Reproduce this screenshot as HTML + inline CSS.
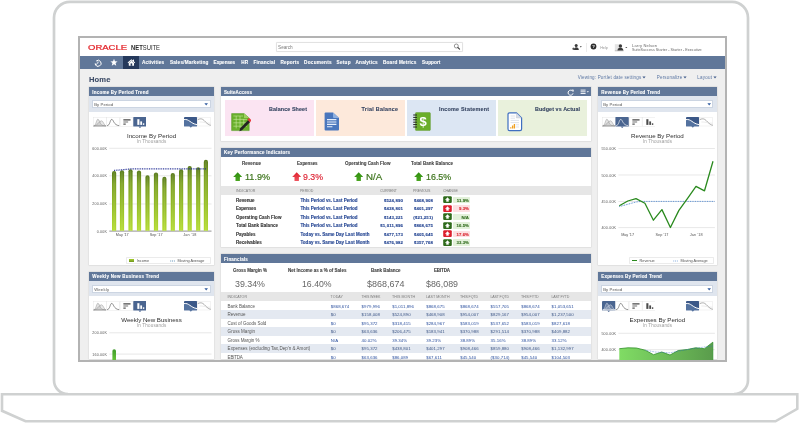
<!DOCTYPE html>
<html><head><meta charset="utf-8"><title>NetSuite Dashboard</title>
<style>
html,body{margin:0;padding:0;background:#fff;}
body{width:800px;height:423px;overflow:hidden;position:relative;font-family:"Liberation Sans", sans-serif;}
#frame{position:absolute;left:0;top:0;}
#scr{position:absolute;left:78px;top:36px;width:645px;height:322px;border:2px solid #b3b3b3;background:#efefef;overflow:hidden;will-change:transform;}
#scr div,#scr svg,#scr .t{position:absolute;}
.t{white-space:nowrap;display:block;}
</style></head><body>
<svg id="frame" width="800" height="423" viewBox="0 0 800 423">
<path d="M68 394.2 A14 14 0 0 1 54 380 V17.8 A16 16 0 0 1 70 1.8 H732 A16 16 0 0 1 748 17.8 V380 A14 14 0 0 1 734 394.2" fill="#fff" stroke="#cfd1d1" stroke-width="2.7"/>
<path d="M2 394.2 H797.3 V408.8 L775.5 421.3 H25.5 L2 410.8 Z" fill="#fff" stroke="#cfd1d1" stroke-width="2.6" stroke-linejoin="miter"/>
</svg>

<div id="scr">
<div style="left:0.00px;top:0.00px;width:645.00px;height:17.80px;background:#fff;"></div>
<div style="left:195.60px;top:4.20px;width:187.00px;height:9.80px;background:#fff;border:0.5px solid #e2e2e2;border-radius:1.2px;box-sizing:border-box;box-shadow:0 0 0.8px #e4e4e4;"></div>
<svg style="left:373.00px;top:5.40px;" width="8.00" height="8.00" viewBox="0 0 8.00 8.00"><circle cx="3.3" cy="3.0" r="2.0" fill="none" stroke="#6a6a6a" stroke-width="0.7"/><path d="M4.8 4.5 L6.6 6.1" stroke="#444" stroke-width="1.1" stroke-linecap="round"/></svg>
<svg style="left:490.50px;top:5.00px;" width="13.50" height="9.00" viewBox="0 0 13.50 9.00"><circle cx="5.2" cy="2.6" r="1.5" fill="#3a3a3a"/><path d="M3 7 Q3 4.2 5.2 4.2 Q7.6 4.2 7.8 7 Z" fill="#3a3a3a"/><path d="M1.2 5.8 h2.4 M2.4 4.6 v2.4" stroke="#3a3a3a" stroke-width="0.8"/><path d="M8.8 3.3 h2 l-1 1.1 z" fill="#333"/></svg>
<div style="left:505.50px;top:4.50px;width:0.50px;height:9.50px;background:#ececec;"></div>
<svg style="left:509.50px;top:5.30px;" width="7.50" height="7.50" viewBox="0 0 7.50 7.50"><circle cx="3.5" cy="3.5" r="2.9" fill="#2e2e2e"/><text x="3.5" y="5.1" font-size="4.4" font-weight="700" fill="#fff" text-anchor="middle" font-family="Liberation Sans, sans-serif">?</text></svg>
<svg style="left:533.50px;top:5.00px;" width="16.50" height="9.00" viewBox="0 0 16.50 9.00"><rect x="0.8" y="1.2" width="5" height="6.4" fill="#e4e4e4"/><circle cx="6.4" cy="3.0" r="1.7" fill="#3a3a3a"/><path d="M3.4 7.6 Q3.4 5.2 5.4 4.8 H7.4 Q9.4 5.2 9.4 7.6 Z" fill="#3a3a3a"/><path d="M0.8 7.8 h8.8" stroke="#666" stroke-width="0.4"/><path d="M11.2 3.9 h2.2 l-1.1 1.2 z" fill="#333"/></svg>
<div style="left:0.00px;top:17.70px;width:645.00px;height:13.10px;background:#607799;"></div>
<div style="left:42.60px;top:17.70px;width:16.90px;height:13.10px;background:#25395c;"></div>
<svg style="left:12.50px;top:19.50px;" width="10.00" height="10.00" viewBox="0 0 10.00 10.00"><path d="M3.2 3.0 A3 3 0 1 1 2.3 6.4" fill="none" stroke="#fff" stroke-width="1"/><path d="M1.6 5.2 L2.4 7.4 L4.2 6.0 Z" fill="#fff"/><path d="M5 3.4 V5.2 H3.8" fill="none" stroke="#fff" stroke-width="0.8"/></svg>
<svg style="left:30.20px;top:19.60px;" width="8.00" height="9.00" viewBox="0 0 8.00 9.00"><path d="M4 0.8 L4.95 3.3 L7.6 3.45 L5.55 5.1 L6.25 7.7 L4 6.25 L1.75 7.7 L2.45 5.1 L0.4 3.45 L3.05 3.3 Z" fill="#fff"/></svg>
<svg style="left:47.00px;top:19.60px;" width="9.00" height="9.00" viewBox="0 0 9.00 9.00"><path d="M0.6 4.6 L4.4 1.2 L8.2 4.6 L7.6 5.2 L4.4 2.4 L1.2 5.2 Z" fill="#fff"/><path d="M1.8 5 L4.4 2.8 L7 5 V7.8 H1.8 Z" fill="#fff"/><rect x="3.6" y="5.4" width="1.6" height="2.4" fill="#25395c"/><rect x="6" y="1.6" width="1" height="1.8" fill="#fff"/></svg>
<svg style="left:562.40px;top:38.20px;" width="4.00" height="3.00" viewBox="0 0 4.00 3.00"><path d="M0.4 0.5 H3.6 L2 2.5 Z" fill="#3f5a88"/></svg>
<svg style="left:602.90px;top:38.20px;" width="4.00" height="3.00" viewBox="0 0 4.00 3.00"><path d="M0.4 0.5 H3.6 L2 2.5 Z" fill="#3f5a88"/></svg>
<svg style="left:632.90px;top:38.20px;" width="4.00" height="3.00" viewBox="0 0 4.00 3.00"><path d="M0.4 0.5 H3.6 L2 2.5 Z" fill="#3f5a88"/></svg>
<div style="left:9.00px;top:49.40px;width:125.00px;height:177.80px;background:#fff;box-shadow:0 0 0.8px 0.4px #d4d4d4;"></div>
<div style="left:9.00px;top:49.30px;width:125.00px;height:9.20px;background:#607799;"></div>
<div style="left:9.00px;top:58.30px;width:125.00px;height:15.40px;background:#dfe5ee;"></div>
<div style="left:12.20px;top:62.20px;width:118.50px;height:8.20px;background:#fff;border:0.4px solid #ccd5e2;box-sizing:border-box;"></div>
<svg style="left:124.40px;top:65.30px;" width="4.40" height="3.00" viewBox="0 0 4.40 3.00"><path d="M0.4 0.3 H4 L2.2 2.5 Z" fill="#2f5a9e"/></svg>
<svg style="left:12.60px;top:78.60px;" width="53.72" height="11.40" viewBox="0 0 53.72 11.40"><rect x="0.20" y="0.2" width="13.03" height="9.2" fill="#fff" stroke="#e0e0e0" stroke-width="0.4"/><path d="M0.60 9.00 C3.00 9.00 3.40 2.20 4.90 2.20 C6.40 2.20 6.80 7.00 9.00 8.20 L12.80 9.00 Z" fill="#808080" fill-opacity="0.22" stroke="#808080" stroke-width="0.4"/><path d="M0.60 9.00 C4.50 9.00 6.20 3.80 8.40 3.80 C10.40 3.80 10.80 8.40 13.00 9.00 Z" fill="#808080" fill-opacity="0.18" stroke="#808080" stroke-width="0.4"/><rect x="13.63" y="0.2" width="13.03" height="9.2" fill="#fff" stroke="#e0e0e0" stroke-width="0.4"/><path d="M14.03 8.70 C17.03 8.70 17.03 2.40 18.73 2.40 C20.63 2.40 20.43 8.20 26.23 8.70" fill="none" stroke="#555" stroke-width="0.65"/><rect x="27.06" y="0.2" width="13.03" height="9.2" fill="#fff" stroke="#e0e0e0" stroke-width="0.4"/><path d="M30.36 2.90 h7.2" stroke="#2e2e2e" stroke-width="1.1"/><path d="M30.36 5.00 h4.8" stroke="#707070" stroke-width="1.0"/><path d="M30.36 7.10 h2.4" stroke="#2e2e2e" stroke-width="1.0"/><rect x="40.29" y="0" width="13.43" height="9.6" rx="0.5" fill="#4a6590"/><path d="M45.50 9.5 h3 l-1.5 1.6 z" fill="#4a6590"/><path d="M45.39 7.90 v-5.7" stroke="#fff" stroke-width="2.1"/><path d="M48.19 7.90 v-3.5" stroke="#fff" stroke-width="1.8"/><path d="M50.59 7.90 v-1.6" stroke="#fff" stroke-width="1.4"/></svg>
<svg style="left:103.60px;top:78.60px;" width="27.00" height="11.40" viewBox="0 0 27.00 11.40"><rect x="0" y="0" width="13" height="9.2" rx="0.5" fill="#3b5888"/><path d="M0 2.6 C5 1.6 6 6.4 13 7.6 V9.2 H0 Z" fill="#54729f"/><path d="M5.3 9.1 h3 l-1.5 1.6 z" fill="#54729f"/><path d="M0 2.6 C5 1.6 6.4 6.6 13 7.6" fill="none" stroke="#fff" stroke-width="1"/><rect x="13.2" y="0.2" width="13.6" height="8.799999999999999" fill="#fff" stroke="#e0e0e0" stroke-width="0.4"/><path d="M13.8 2.6 C18 0.6 19.6 3 21.6 5 S25 8 26.8 8.3" fill="none" stroke="#888" stroke-width="0.7"/><path d="M15.4 5 C19 4.6 22 6.4 26.4 6.2" fill="none" stroke="#cfcfcf" stroke-width="0.4"/></svg>
<svg style="left:9.00px;top:102.00px;" width="125.00" height="100.00" viewBox="89 140 125 100"><path d="M109.3 148.3 H211.5" stroke="#dedede" stroke-width="0.7"/><path d="M109.3 175.8 H211.5" stroke="#dedede" stroke-width="0.7"/><path d="M109.3 204.0 H211.5" stroke="#dedede" stroke-width="0.7"/><path d="M109.3 231.2 H211.5" stroke="#a8a8a8" stroke-width="1.2"/><defs><linearGradient id="bg1" x1="0" y1="0" x2="0" y2="1"><stop offset="0" stop-color="#587a1c"/><stop offset="0.22" stop-color="#7ea324"/><stop offset="0.65" stop-color="#9ac229"/><stop offset="1" stop-color="#b4dc32"/></linearGradient></defs><path d="M112.00 230.8 V173.10 a2.1 2.1 0 0 1 4.2 0 V230.8 Z" fill="url(#bg1)"/><path d="M113.40 230.8 V172.20 h1.4 V230.8 Z" fill="#fff" fill-opacity="0.1"/><path d="M119.90 230.8 V172.30 a2.1 2.1 0 0 1 4.2 0 V230.8 Z" fill="url(#bg1)"/><path d="M121.30 230.8 V171.40 h1.4 V230.8 Z" fill="#fff" fill-opacity="0.1"/><path d="M128.40 230.8 V171.30 a2.1 2.1 0 0 1 4.2 0 V230.8 Z" fill="url(#bg1)"/><path d="M129.80 230.8 V170.40 h1.4 V230.8 Z" fill="#fff" fill-opacity="0.1"/><path d="M136.90 230.8 V172.60 a2.1 2.1 0 0 1 4.2 0 V230.8 Z" fill="url(#bg1)"/><path d="M138.30 230.8 V171.70 h1.4 V230.8 Z" fill="#fff" fill-opacity="0.1"/><path d="M145.40 230.8 V177.30 a2.1 2.1 0 0 1 4.2 0 V230.8 Z" fill="url(#bg1)"/><path d="M146.80 230.8 V176.40 h1.4 V230.8 Z" fill="#fff" fill-opacity="0.1"/><path d="M153.90 230.8 V174.50 a2.1 2.1 0 0 1 4.2 0 V230.8 Z" fill="url(#bg1)"/><path d="M155.30 230.8 V173.60 h1.4 V230.8 Z" fill="#fff" fill-opacity="0.1"/><path d="M162.30 230.8 V178.90 a2.1 2.1 0 0 1 4.2 0 V230.8 Z" fill="url(#bg1)"/><path d="M163.70 230.8 V178.00 h1.4 V230.8 Z" fill="#fff" fill-opacity="0.1"/><path d="M170.70 230.8 V175.10 a2.1 2.1 0 0 1 4.2 0 V230.8 Z" fill="url(#bg1)"/><path d="M172.10 230.8 V174.20 h1.4 V230.8 Z" fill="#fff" fill-opacity="0.1"/><path d="M179.00 230.8 V171.30 a2.1 2.1 0 0 1 4.2 0 V230.8 Z" fill="url(#bg1)"/><path d="M180.40 230.8 V170.40 h1.4 V230.8 Z" fill="#fff" fill-opacity="0.1"/><path d="M187.60 230.8 V168.10 a2.1 2.1 0 0 1 4.2 0 V230.8 Z" fill="url(#bg1)"/><path d="M189.00 230.8 V167.20 h1.4 V230.8 Z" fill="#fff" fill-opacity="0.1"/><path d="M196.10 230.8 V169.40 a2.1 2.1 0 0 1 4.2 0 V230.8 Z" fill="url(#bg1)"/><path d="M197.50 230.8 V168.50 h1.4 V230.8 Z" fill="#fff" fill-opacity="0.1"/><path d="M203.80 230.8 V161.90 a2.1 2.1 0 0 1 4.2 0 V230.8 Z" fill="url(#bg1)"/><path d="M205.20 230.8 V161.00 h1.4 V230.8 Z" fill="#fff" fill-opacity="0.1"/><path d="M114.1 170.4 L122 169.8 L130.5 168.9 H206.5" fill="none" stroke="#1f2a93" stroke-width="1.2" stroke-dasharray="0.9 0.85"/></svg>
<div style="left:46.40px;top:219.00px;width:84.20px;height:6.80px;background:#fff;border:0.4px solid #ebebeb;box-sizing:border-box;border-radius:0.8px;"></div>
<div style="left:49.30px;top:220.60px;width:4.60px;height:3.60px;background:#86ad24;background:linear-gradient(#a6cf2e,#6e9420);"></div>
<svg style="left:89.60px;top:221.60px;" width="5.40" height="2.00" viewBox="0 0 5.40 2.00"><path d="M0.3 1 H5.2" stroke="#2d6f9f" stroke-width="0.8" stroke-dasharray="0.9 0.9"/></svg>
<div style="left:9.00px;top:233.90px;width:125.00px;height:87.60px;background:#fff;box-shadow:0 0 0.8px 0.4px #d4d4d4;"></div>
<div style="left:9.00px;top:233.80px;width:125.00px;height:9.20px;background:#607799;"></div>
<div style="left:9.00px;top:242.80px;width:125.00px;height:15.40px;background:#dfe5ee;"></div>
<div style="left:12.20px;top:246.70px;width:118.50px;height:8.20px;background:#fff;border:0.4px solid #ccd5e2;box-sizing:border-box;"></div>
<svg style="left:124.40px;top:249.80px;" width="4.40" height="3.00" viewBox="0 0 4.40 3.00"><path d="M0.4 0.3 H4 L2.2 2.5 Z" fill="#2f5a9e"/></svg>
<svg style="left:12.60px;top:263.10px;" width="53.72" height="11.40" viewBox="0 0 53.72 11.40"><rect x="0.20" y="0.2" width="13.03" height="9.2" fill="#fff" stroke="#e0e0e0" stroke-width="0.4"/><path d="M0.60 9.00 C3.00 9.00 3.40 2.20 4.90 2.20 C6.40 2.20 6.80 7.00 9.00 8.20 L12.80 9.00 Z" fill="#808080" fill-opacity="0.22" stroke="#808080" stroke-width="0.4"/><path d="M0.60 9.00 C4.50 9.00 6.20 3.80 8.40 3.80 C10.40 3.80 10.80 8.40 13.00 9.00 Z" fill="#808080" fill-opacity="0.18" stroke="#808080" stroke-width="0.4"/><rect x="13.63" y="0.2" width="13.03" height="9.2" fill="#fff" stroke="#e0e0e0" stroke-width="0.4"/><path d="M14.03 8.70 C17.03 8.70 17.03 2.40 18.73 2.40 C20.63 2.40 20.43 8.20 26.23 8.70" fill="none" stroke="#555" stroke-width="0.65"/><rect x="27.06" y="0.2" width="13.03" height="9.2" fill="#fff" stroke="#e0e0e0" stroke-width="0.4"/><path d="M30.36 2.90 h7.2" stroke="#2e2e2e" stroke-width="1.1"/><path d="M30.36 5.00 h4.8" stroke="#707070" stroke-width="1.0"/><path d="M30.36 7.10 h2.4" stroke="#2e2e2e" stroke-width="1.0"/><rect x="40.29" y="0" width="13.43" height="9.6" rx="0.5" fill="#4a6590"/><path d="M45.50 9.5 h3 l-1.5 1.6 z" fill="#4a6590"/><path d="M45.39 7.90 v-5.7" stroke="#fff" stroke-width="2.1"/><path d="M48.19 7.90 v-3.5" stroke="#fff" stroke-width="1.8"/><path d="M50.59 7.90 v-1.6" stroke="#fff" stroke-width="1.4"/></svg>
<svg style="left:103.60px;top:263.10px;" width="27.00" height="11.40" viewBox="0 0 27.00 11.40"><rect x="0" y="0" width="13" height="9.2" rx="0.5" fill="#3b5888"/><path d="M0 2.6 C5 1.6 6 6.4 13 7.6 V9.2 H0 Z" fill="#54729f"/><path d="M5.3 9.1 h3 l-1.5 1.6 z" fill="#54729f"/><path d="M0 2.6 C5 1.6 6.4 6.6 13 7.6" fill="none" stroke="#fff" stroke-width="1"/><rect x="13.2" y="0.2" width="13.6" height="8.799999999999999" fill="#fff" stroke="#e0e0e0" stroke-width="0.4"/><path d="M13.8 2.6 C18 0.6 19.6 3 21.6 5 S25 8 26.8 8.3" fill="none" stroke="#888" stroke-width="0.7"/><path d="M15.4 5 C19 4.6 22 6.4 26.4 6.2" fill="none" stroke="#cfcfcf" stroke-width="0.4"/></svg>
<svg style="left:9.00px;top:290.00px;" width="125.00" height="34.00" viewBox="89 328 125 34"><path d="M109.3 332.8 H211.5" stroke="#dedede" stroke-width="0.7"/><path d="M109.3 354.1 H211.5" stroke="#dedede" stroke-width="0.7"/><defs><linearGradient id="bg2" x1="0" y1="0" x2="0" y2="1"><stop offset="0" stop-color="#3f9a2a"/><stop offset="1" stop-color="#6ccb3a"/></linearGradient></defs><path d="M112.4 362 V351 a1.8 1.8 0 0 1 3.6 0 V362 Z" fill="url(#bg2)"/></svg>
<div style="left:518.00px;top:49.40px;width:118.80px;height:177.80px;background:#fff;box-shadow:0 0 0.8px 0.4px #d4d4d4;"></div>
<div style="left:518.00px;top:49.30px;width:118.80px;height:9.20px;background:#607799;"></div>
<div style="left:518.00px;top:58.30px;width:118.80px;height:15.40px;background:#dfe5ee;"></div>
<div style="left:521.20px;top:62.20px;width:112.30px;height:8.20px;background:#fff;border:0.4px solid #ccd5e2;box-sizing:border-box;"></div>
<svg style="left:627.20px;top:65.30px;" width="4.40" height="3.00" viewBox="0 0 4.40 3.00"><path d="M0.4 0.3 H4 L2.2 2.5 Z" fill="#2f5a9e"/></svg>
<svg style="left:521.60px;top:78.60px;" width="53.72" height="11.40" viewBox="0 0 53.72 11.40"><rect x="0.20" y="0.2" width="13.03" height="9.2" fill="#fff" stroke="#e0e0e0" stroke-width="0.4"/><path d="M0.60 9.00 C3.00 9.00 3.40 2.20 4.90 2.20 C6.40 2.20 6.80 7.00 9.00 8.20 L12.80 9.00 Z" fill="#808080" fill-opacity="0.22" stroke="#808080" stroke-width="0.4"/><path d="M0.60 9.00 C4.50 9.00 6.20 3.80 8.40 3.80 C10.40 3.80 10.80 8.40 13.00 9.00 Z" fill="#808080" fill-opacity="0.18" stroke="#808080" stroke-width="0.4"/><rect x="13.43" y="0" width="13.43" height="9.6" rx="0.5" fill="#4a6590"/><path d="M18.64 9.5 h3 l-1.5 1.6 z" fill="#4a6590"/><path d="M14.03 8.70 C17.03 8.70 17.03 2.40 18.73 2.40 C20.63 2.40 20.43 8.20 26.23 8.70" fill="none" stroke="#fff" stroke-width="0.65"/><rect x="27.06" y="0.2" width="13.03" height="9.2" fill="#fff" stroke="#e0e0e0" stroke-width="0.4"/><path d="M30.36 2.90 h7.2" stroke="#2e2e2e" stroke-width="1.1"/><path d="M30.36 5.00 h4.8" stroke="#707070" stroke-width="1.0"/><path d="M30.36 7.10 h2.4" stroke="#2e2e2e" stroke-width="1.0"/><rect x="40.49" y="0.2" width="13.03" height="9.2" fill="#fff" stroke="#e0e0e0" stroke-width="0.4"/><path d="M45.39 7.90 v-5.7" stroke="#4a4a4a" stroke-width="2.1"/><path d="M48.19 7.90 v-3.5" stroke="#4a4a4a" stroke-width="1.8"/><path d="M50.59 7.90 v-1.6" stroke="#4a4a4a" stroke-width="1.4"/></svg>
<svg style="left:606.40px;top:78.60px;" width="27.00" height="11.40" viewBox="0 0 27.00 11.40"><rect x="0" y="0" width="13" height="9.2" rx="0.5" fill="#3b5888"/><path d="M0 2.6 C5 1.6 6 6.4 13 7.6 V9.2 H0 Z" fill="#54729f"/><path d="M5.3 9.1 h3 l-1.5 1.6 z" fill="#54729f"/><path d="M0 2.6 C5 1.6 6.4 6.6 13 7.6" fill="none" stroke="#fff" stroke-width="1"/><rect x="13.2" y="0.2" width="13.6" height="8.799999999999999" fill="#fff" stroke="#e0e0e0" stroke-width="0.4"/><path d="M13.8 2.6 C18 0.6 19.6 3 21.6 5 S25 8 26.8 8.3" fill="none" stroke="#888" stroke-width="0.7"/><path d="M15.4 5 C19 4.6 22 6.4 26.4 6.2" fill="none" stroke="#cfcfcf" stroke-width="0.4"/></svg>
<svg style="left:518.00px;top:102.00px;" width="119.00" height="100.00" viewBox="598 140 119 100"><path d="M618.4 148.5 H714.9" stroke="#dedede" stroke-width="0.7"/><path d="M618.4 175.0 H714.9" stroke="#dedede" stroke-width="0.7"/><path d="M618.4 201.5 H714.9" stroke="#dedede" stroke-width="0.7"/><path d="M618.4 227.6 H714.9" stroke="#dedede" stroke-width="0.7"/><path d="M619.3 206.6 L636 202 L641 201.4 H714.5" fill="none" stroke="#4f88d0" stroke-width="1" stroke-dasharray="0.85 0.85"/><path d="M619.3 205.8 L627.8 201.0 L636.0 198.6 L644.9 203.3 L653.4 220.2 L661.9 209.6 L670.4 227.5 L678.9 210.4 L687.4 198.7 L696.0 186.4 L704.5 190.8 L713.0 161.2" fill="none" stroke="#2a8a1e" stroke-width="1.3" stroke-linejoin="round"/></svg>
<div style="left:549.40px;top:218.80px;width:84.50px;height:7.00px;background:#fff;border:0.4px solid #ebebeb;box-sizing:border-box;border-radius:0.8px;"></div>
<div style="left:552.00px;top:222.20px;width:4.90px;height:1.00px;background:#2a8a1e;"></div>
<svg style="left:592.70px;top:221.60px;" width="5.50" height="2.00" viewBox="0 0 5.50 2.00"><path d="M0.3 1 H5.2" stroke="#5f93d3" stroke-width="0.8" stroke-dasharray="0.9 0.9"/></svg>
<div style="left:518.00px;top:233.90px;width:118.80px;height:87.60px;background:#fff;box-shadow:0 0 0.8px 0.4px #d4d4d4;"></div>
<div style="left:518.00px;top:233.80px;width:118.80px;height:9.20px;background:#607799;"></div>
<div style="left:518.00px;top:242.80px;width:118.80px;height:15.40px;background:#dfe5ee;"></div>
<div style="left:521.20px;top:246.70px;width:112.30px;height:8.20px;background:#fff;border:0.4px solid #ccd5e2;box-sizing:border-box;"></div>
<svg style="left:627.20px;top:249.80px;" width="4.40" height="3.00" viewBox="0 0 4.40 3.00"><path d="M0.4 0.3 H4 L2.2 2.5 Z" fill="#2f5a9e"/></svg>
<svg style="left:521.60px;top:263.10px;" width="53.72" height="11.40" viewBox="0 0 53.72 11.40"><rect x="0.00" y="0" width="13.43" height="9.6" rx="0.5" fill="#4a6590"/><path d="M5.21 9.5 h3 l-1.5 1.6 z" fill="#4a6590"/><path d="M0.60 9.00 C3.00 9.00 3.40 2.20 4.90 2.20 C6.40 2.20 6.80 7.00 9.00 8.20 L12.80 9.00 Z" fill="#fff" fill-opacity="0.22" stroke="#fff" stroke-width="0.4"/><path d="M0.60 9.00 C4.50 9.00 6.20 3.80 8.40 3.80 C10.40 3.80 10.80 8.40 13.00 9.00 Z" fill="#fff" fill-opacity="0.18" stroke="#fff" stroke-width="0.4"/><rect x="13.63" y="0.2" width="13.03" height="9.2" fill="#fff" stroke="#e0e0e0" stroke-width="0.4"/><path d="M14.03 8.70 C17.03 8.70 17.03 2.40 18.73 2.40 C20.63 2.40 20.43 8.20 26.23 8.70" fill="none" stroke="#555" stroke-width="0.65"/><rect x="27.06" y="0.2" width="13.03" height="9.2" fill="#fff" stroke="#e0e0e0" stroke-width="0.4"/><path d="M30.36 2.90 h7.2" stroke="#2e2e2e" stroke-width="1.1"/><path d="M30.36 5.00 h4.8" stroke="#707070" stroke-width="1.0"/><path d="M30.36 7.10 h2.4" stroke="#2e2e2e" stroke-width="1.0"/><rect x="40.49" y="0.2" width="13.03" height="9.2" fill="#fff" stroke="#e0e0e0" stroke-width="0.4"/><path d="M45.39 7.90 v-5.7" stroke="#4a4a4a" stroke-width="2.1"/><path d="M48.19 7.90 v-3.5" stroke="#4a4a4a" stroke-width="1.8"/><path d="M50.59 7.90 v-1.6" stroke="#4a4a4a" stroke-width="1.4"/></svg>
<svg style="left:606.40px;top:263.10px;" width="27.00" height="11.40" viewBox="0 0 27.00 11.40"><rect x="0" y="0" width="13" height="9.2" rx="0.5" fill="#3b5888"/><path d="M0 2.6 C5 1.6 6 6.4 13 7.6 V9.2 H0 Z" fill="#54729f"/><path d="M5.3 9.1 h3 l-1.5 1.6 z" fill="#54729f"/><path d="M0 2.6 C5 1.6 6.4 6.6 13 7.6" fill="none" stroke="#fff" stroke-width="1"/><rect x="13.2" y="0.2" width="13.6" height="8.799999999999999" fill="#fff" stroke="#e0e0e0" stroke-width="0.4"/><path d="M13.8 2.6 C18 0.6 19.6 3 21.6 5 S25 8 26.8 8.3" fill="none" stroke="#888" stroke-width="0.7"/><path d="M15.4 5 C19 4.6 22 6.4 26.4 6.2" fill="none" stroke="#cfcfcf" stroke-width="0.4"/></svg>
<svg style="left:518.00px;top:290.00px;" width="119.00" height="34.00" viewBox="598 328 119 34"><path d="M618.4 333.3 H714.9" stroke="#dedede" stroke-width="0.7"/><path d="M618.4 349.7 H714.9" stroke="#dedede" stroke-width="0.7"/><defs><linearGradient id="ag" x1="0" y1="0" x2="1" y2="0"><stop offset="0" stop-color="#80dc64"/><stop offset="1" stop-color="#5a9c4c"/></linearGradient></defs><path d="M619.3 362 L619.3 348.7 L628.0 347.8 L636.3 348.0 L645.3 350.2 L653.5 354.7 L661.8 352.0 L670.0 355.0 L678.3 350.5 L687.3 349.5 L695.5 347.8 L704.5 348.7 L712.8 342.2 L712.8 362 Z" fill="url(#ag)"/><path d="M619.3 348.7 L628.0 347.8 L636.3 348.0 L645.3 350.2 L653.5 354.7 L661.8 352.0 L670.0 355.0 L678.3 350.5 L687.3 349.5 L695.5 347.8 L704.5 348.7 L712.8 342.2 V362" fill="none" stroke="#2f8f28" stroke-width="0.8" stroke-linejoin="round"/><path d="M645.5 350.2 L655 352 L670 352.8 L678 351.2 L695.5 348.2 L712.8 346" fill="none" stroke="#3a78c8" stroke-width="0.6" stroke-dasharray="0.8 0.8"/></svg>
<div style="left:141.00px;top:49.40px;width:370.20px;height:53.80px;background:#fff;box-shadow:0 0 0.8px 0.4px #d4d4d4;"></div>
<div style="left:141.00px;top:49.30px;width:370.20px;height:9.20px;background:#607799;"></div>
<svg style="left:486.50px;top:50.60px;" width="7.50" height="7.00" viewBox="0 0 7.50 7.00"><path d="M5.6 2.2 A2.5 2.5 0 1 0 6 4.4" fill="none" stroke="#fff" stroke-width="1"/><path d="M4.6 0.6 L6.8 0.8 L6.4 3 Z" fill="#fff"/></svg>
<svg style="left:499.50px;top:51.40px;" width="10.00" height="6.00" viewBox="0 0 10.00 6.00"><path d="M0.6 1.1 h5 M0.6 2.8 h5 M0.6 4.5 h5" stroke="#fff" stroke-width="0.9"/><path d="M6.6 2.2 h2.4 l-1.2 1.3 z" fill="#fff"/></svg>
<div style="left:144.80px;top:61.90px;width:89.20px;height:36.00px;background:#fbe4f2;"></div>
<div style="left:236.00px;top:61.90px;width:89.00px;height:36.00px;background:#fde9db;"></div>
<div style="left:327.00px;top:61.90px;width:88.80px;height:36.00px;background:#dce6f3;"></div>
<div style="left:418.20px;top:61.90px;width:89.00px;height:36.00px;background:#e9f1dc;"></div>
<svg style="left:151.00px;top:74.60px;" width="20.00" height="19.00" viewBox="0 0 20.00 19.00"><path d="M0.6 0.6 H13 L18.2 5 V17.6 H0.6 Z" fill="#6ab02c" stroke="#4f9420" stroke-width="0.5"/>
<path d="M13 0.6 V5 H18.2 Z" fill="#9fd060"/>
<path d="M2.4 3 H12 M2.4 6.4 H16 M2.4 9.8 H16 M2.4 13.2 H16 M5.2 3 V15.4 M9 3 V15.4 M12.8 6 V15.4" stroke="#c8e8a0" stroke-width="0.6" fill="none"/>
<path d="M17.2 7 L19.2 9 L11 17.2 L8.4 18.2 L9.2 15.2 Z" fill="#222"/>
<path d="M16.6 6.2 a1.6 1.6 0 0 1 3 2.4 l-0.6 0.6 l-2.2 -2.2 z" fill="#e8383c"/></svg>
<svg style="left:244.00px;top:74.00px;" width="16.00" height="19.00" viewBox="0 0 16.00 19.00"><path d="M0.6 1.4 Q0.6 0.4 1.6 0.4 H9 L15 6 V17.6 Q15 18.6 14 18.6 H1.6 Q0.6 18.6 0.6 17.6 Z" fill="#4a77bd"/>
<path d="M9 0.4 L15 6 H10 Q9 6 9 5 Z" fill="#8fb0e0"/>
<path d="M3 7.6 H12.4 M3 10 H12.4 M3 12.4 H12.4 M3 14.8 H8.4" stroke="#e6eefa" stroke-width="1.1"/></svg>
<svg style="left:333.40px;top:74.00px;" width="18.00" height="19.00" viewBox="0 0 18.00 19.00"><rect x="2.4" y="0.4" width="15" height="18.2" rx="1.2" fill="#6aae2a"/>
<rect x="2.4" y="0.4" width="15" height="18.2" rx="1.2" fill="none" stroke="#558f20" stroke-width="0.4"/>
<path d="M0.6 3 h3 M0.6 5.4 h3 M0.6 7.8 h3 M0.6 10.2 h3 M0.6 12.6 h3 M0.6 15 h3" stroke="#222" stroke-width="1" stroke-linecap="round"/>
<text x="10.2" y="14.2" font-size="13" font-weight="700" fill="#fff" text-anchor="middle" font-family="Liberation Sans, sans-serif">$</text></svg>
<svg style="left:426.50px;top:74.00px;" width="16.00" height="19.50" viewBox="0 0 16.00 19.50"><path d="M1 2.4 Q1 0.8 2.6 0.8 H9.4 L14.6 6 V17 Q14.6 18.6 13 18.6 H2.6 Q1 18.6 1 17 Z" fill="#fff" stroke="#3f6fc0" stroke-width="1.2"/>
<path d="M9.4 1 V6 H14.4" fill="#d8dde6" stroke="#b8c0cc" stroke-width="0.4"/>
<path d="M3.6 4 H8 M3.6 6.2 H8 M3.6 8.4 H12 M3.6 10.6 H12 M8.6 12.8 H12 M8.6 15 H12" stroke="#cfd6e2" stroke-width="0.7"/>
<path d="M3.8 16.6 v-1.4 M5.6 16.6 v-3 M7.4 16.6 v-4.6" stroke="#f0a020" stroke-width="1.3"/></svg>
<div style="left:141.00px;top:110.30px;width:370.20px;height:99.00px;background:#fff;box-shadow:0 0 0.8px 0.4px #d4d4d4;"></div>
<div style="left:141.00px;top:110.20px;width:370.20px;height:9.20px;background:#607799;"></div>
<svg style="left:153.00px;top:134.30px;" width="9.40" height="9.20" viewBox="0 0 9.40 9.20"><defs><linearGradient id="ar233" x1="0" y1="0" x2="0" y2="1"><stop offset="0" stop-color="#2f8f10"/><stop offset="1" stop-color="#4aa520"/></linearGradient></defs><path d="M4.7 0.3 L9.2 5 H6.9 V9 H2.5 V5 H0.2 Z" fill="url(#ar233)"/></svg>
<svg style="left:212.00px;top:134.30px;" width="9.40" height="9.20" viewBox="0 0 9.40 9.20"><defs><linearGradient id="ar292" x1="0" y1="0" x2="0" y2="1"><stop offset="0" stop-color="#e0202c"/><stop offset="1" stop-color="#ee5560"/></linearGradient></defs><path d="M4.7 0.3 L9.2 5 H6.9 V9 H2.5 V5 H0.2 Z" fill="url(#ar292)"/></svg>
<svg style="left:274.00px;top:134.30px;" width="9.40" height="9.20" viewBox="0 0 9.40 9.20"><defs><linearGradient id="ar354" x1="0" y1="0" x2="0" y2="1"><stop offset="0" stop-color="#2f8f10"/><stop offset="1" stop-color="#4aa520"/></linearGradient></defs><path d="M4.7 0.3 L9.2 5 H6.9 V9 H2.5 V5 H0.2 Z" fill="url(#ar354)"/></svg>
<svg style="left:333.60px;top:134.30px;" width="9.40" height="9.20" viewBox="0 0 9.40 9.20"><defs><linearGradient id="ar413" x1="0" y1="0" x2="0" y2="1"><stop offset="0" stop-color="#2f8f10"/><stop offset="1" stop-color="#4aa520"/></linearGradient></defs><path d="M4.7 0.3 L9.2 5 H6.9 V9 H2.5 V5 H0.2 Z" fill="url(#ar413)"/></svg>
<div style="left:141.00px;top:148.40px;width:370.20px;height:8.60px;background:#e6e6e6;"></div>
<div style="left:373.00px;top:158.60px;width:17.20px;height:6.80px;background:#e3f1da;border-radius:0.8px;"></div>
<svg style="left:363.00px;top:158.40px;" width="9.20" height="7.20" viewBox="0 0 9.20 7.20"><rect x="0.2" y="0.2" width="8.6" height="6.8" rx="1.1" fill="#2f6b1c"/><path d="M4.5 1.5 L6.7 3.7 H5.6 V5.6 H3.4 V3.7 H2.3 Z" fill="#fff" stroke="#fff" stroke-width="0.3" stroke-linejoin="round"/></svg>
<div style="left:373.00px;top:167.12px;width:17.20px;height:6.80px;background:#fde0e2;border-radius:0.8px;"></div>
<svg style="left:363.00px;top:166.92px;" width="9.20" height="7.20" viewBox="0 0 9.20 7.20"><rect x="0.2" y="0.2" width="8.6" height="6.8" rx="1.1" fill="#dc1f2e"/><path d="M4.5 1.5 L6.7 3.7 H5.6 V5.6 H3.4 V3.7 H2.3 Z" fill="#fff" stroke="#fff" stroke-width="0.3" stroke-linejoin="round"/></svg>
<div style="left:373.00px;top:175.64px;width:17.20px;height:6.80px;background:#e3f1da;border-radius:0.8px;"></div>
<svg style="left:363.00px;top:175.44px;" width="9.20" height="7.20" viewBox="0 0 9.20 7.20"><rect x="0.2" y="0.2" width="8.6" height="6.8" rx="1.1" fill="#2f6b1c"/><path d="M4.5 1.5 L6.7 3.7 H5.6 V5.6 H3.4 V3.7 H2.3 Z" fill="#fff" stroke="#fff" stroke-width="0.3" stroke-linejoin="round"/></svg>
<div style="left:373.00px;top:184.16px;width:17.20px;height:6.80px;background:#e3f1da;border-radius:0.8px;"></div>
<svg style="left:363.00px;top:183.96px;" width="9.20" height="7.20" viewBox="0 0 9.20 7.20"><rect x="0.2" y="0.2" width="8.6" height="6.8" rx="1.1" fill="#2f6b1c"/><path d="M4.5 1.5 L6.7 3.7 H5.6 V5.6 H3.4 V3.7 H2.3 Z" fill="#fff" stroke="#fff" stroke-width="0.3" stroke-linejoin="round"/></svg>
<div style="left:373.00px;top:192.68px;width:17.20px;height:6.80px;background:#fde0e2;border-radius:0.8px;"></div>
<svg style="left:363.00px;top:192.48px;" width="9.20" height="7.20" viewBox="0 0 9.20 7.20"><rect x="0.2" y="0.2" width="8.6" height="6.8" rx="1.1" fill="#dc1f2e"/><path d="M4.5 1.5 L6.7 3.7 H5.6 V5.6 H3.4 V3.7 H2.3 Z" fill="#fff" stroke="#fff" stroke-width="0.3" stroke-linejoin="round"/></svg>
<div style="left:373.00px;top:201.20px;width:17.20px;height:6.80px;background:#e3f1da;border-radius:0.8px;"></div>
<svg style="left:363.00px;top:201.00px;" width="9.20" height="7.20" viewBox="0 0 9.20 7.20"><rect x="0.2" y="0.2" width="8.6" height="6.8" rx="1.1" fill="#2f6b1c"/><path d="M4.5 1.5 L6.7 3.7 H5.6 V5.6 H3.4 V3.7 H2.3 Z" fill="#fff" stroke="#fff" stroke-width="0.3" stroke-linejoin="round"/></svg>
<div style="left:141.00px;top:216.40px;width:370.20px;height:105.10px;background:#fff;box-shadow:0 0 0.8px 0.4px #d4d4d4;"></div>
<div style="left:141.00px;top:216.30px;width:370.20px;height:9.20px;background:#607799;"></div>
<div style="left:141.00px;top:254.40px;width:370.20px;height:8.60px;background:#e6e6e6;"></div>
<div style="left:141.00px;top:272.26px;width:370.20px;height:8.52px;background:#e4e9f1;"></div>
<div style="left:141.00px;top:289.30px;width:370.20px;height:8.52px;background:#e4e9f1;"></div>
<div style="left:141.00px;top:306.34px;width:370.20px;height:8.52px;background:#e4e9f1;"></div>
<span id="t0" class="t" style="font-size:6.5px;font-weight:400;color:#e3262c;line-height:7.00px;top:5.84px;transform:scaleX(1.4588);transform-origin:0 50%;left:8.40px;-webkit-text-stroke:0.22px #e3262c;">ORACLE</span>
<span id="t1" class="t" style="font-size:6.3px;font-weight:400;color:#2a2a2a;line-height:7.00px;top:6.07px;transform:scaleX(0.9308);transform-origin:0 50%;left:51.30px;"><b>NET</b>SUITE</span>
<span id="t2" class="t" style="font-size:4.7px;font-weight:400;color:#7c7c7c;line-height:5.00px;top:7.09px;letter-spacing:-0.052px;left:198.10px;">Search</span>
<span id="t3" class="t" style="font-size:3.8px;font-weight:400;color:#9a9a9a;line-height:4.00px;top:7.87px;letter-spacing:-0.071px;left:520.20px;">Help</span>
<span id="t4" class="t" style="font-size:4.0px;font-weight:400;color:#666;line-height:5.00px;top:5.14px;letter-spacing:0.210px;left:552.00px;">Larry Nelson</span>
<span id="t5" class="t" style="font-size:3.7px;font-weight:400;color:#666;line-height:4.00px;top:10.43px;letter-spacing:0.038px;left:552.00px;">SuiteSuccess Starter - Starter - Executive</span>
<span id="t6" class="t" style="font-size:4.7px;font-weight:700;color:#fff;line-height:5.00px;top:21.99px;letter-spacing:0.128px;left:62.00px;-webkit-text-stroke:0.1px;">Activities</span>
<span id="t7" class="t" style="font-size:4.7px;font-weight:700;color:#fff;line-height:5.00px;top:21.99px;letter-spacing:0.193px;left:90.00px;-webkit-text-stroke:0.1px;">Sales/Marketing</span>
<span id="t8" class="t" style="font-size:4.7px;font-weight:700;color:#fff;line-height:5.00px;top:21.99px;letter-spacing:-0.042px;left:133.60px;-webkit-text-stroke:0.1px;">Expenses</span>
<span id="t9" class="t" style="font-size:4.7px;font-weight:700;color:#fff;line-height:5.00px;top:21.99px;letter-spacing:0.219px;left:161.20px;-webkit-text-stroke:0.1px;">HR</span>
<span id="t10" class="t" style="font-size:4.7px;font-weight:700;color:#fff;line-height:5.00px;top:21.99px;letter-spacing:0.134px;left:173.60px;-webkit-text-stroke:0.1px;">Financial</span>
<span id="t11" class="t" style="font-size:4.7px;font-weight:700;color:#fff;line-height:5.00px;top:21.99px;letter-spacing:0.147px;left:200.40px;-webkit-text-stroke:0.1px;">Reports</span>
<span id="t12" class="t" style="font-size:4.7px;font-weight:700;color:#fff;line-height:5.00px;top:21.99px;letter-spacing:0.259px;left:224.00px;-webkit-text-stroke:0.1px;">Documents</span>
<span id="t13" class="t" style="font-size:4.7px;font-weight:700;color:#fff;line-height:5.00px;top:21.99px;letter-spacing:0.242px;left:256.60px;-webkit-text-stroke:0.1px;">Setup</span>
<span id="t14" class="t" style="font-size:4.7px;font-weight:700;color:#fff;line-height:5.00px;top:21.99px;letter-spacing:0.145px;left:275.60px;-webkit-text-stroke:0.1px;">Analytics</span>
<span id="t15" class="t" style="font-size:4.7px;font-weight:700;color:#fff;line-height:5.00px;top:21.99px;letter-spacing:0.178px;left:303.00px;-webkit-text-stroke:0.1px;">Board Metrics</span>
<span id="t16" class="t" style="font-size:4.7px;font-weight:700;color:#fff;line-height:5.00px;top:21.99px;letter-spacing:0.072px;left:342.00px;-webkit-text-stroke:0.1px;">Support</span>
<span id="t17" class="t" style="font-size:7.6px;font-weight:700;color:#3c4b66;line-height:9.00px;top:37.14px;letter-spacing:0.097px;left:9.00px;-webkit-text-stroke:0.1px;">Home</span>
<span id="t18" class="t" style="font-size:4.5px;font-weight:400;color:#5a75a2;line-height:5.00px;top:36.62px;letter-spacing:0.188px;left:497.80px;">Viewing: Portlet date settings</span>
<span id="t19" class="t" style="font-size:4.5px;font-weight:400;color:#5a75a2;line-height:5.00px;top:36.62px;letter-spacing:0.188px;left:576.80px;">Personalize</span>
<span id="t20" class="t" style="font-size:4.5px;font-weight:400;color:#5a75a2;line-height:5.00px;top:36.62px;letter-spacing:0.217px;left:617.30px;">Layout</span>
<span id="t21" class="t" style="font-size:4.5px;font-weight:700;color:#fff;line-height:5.00px;top:51.52px;letter-spacing:0.223px;left:12.30px;-webkit-text-stroke:0.1px;">Income By Period Trend</span>
<span id="t22" class="t" style="font-size:4.2px;font-weight:400;color:#555;line-height:5.00px;top:64.21px;letter-spacing:0.093px;left:14.20px;">By Period</span>
<span id="t23" class="t" style="font-size:6.2px;font-weight:400;color:#2e2e2e;line-height:7.00px;top:93.93px;letter-spacing:0.024px;left:-28.49px;width:200px;text-align:center;">Income By Period</span>
<span id="t24" class="t" style="font-size:4.5px;font-weight:400;color:#9a9a9a;line-height:5.00px;top:100.72px;letter-spacing:0.192px;left:-28.40px;width:200px;text-align:center;">In Thousands</span>
<span id="t25" class="t" style="font-size:3.6px;font-weight:400;color:#555;line-height:4.00px;top:109.10px;letter-spacing:0.202px;left:12.30px;">600.00K</span>
<span id="t26" class="t" style="font-size:3.6px;font-weight:400;color:#555;line-height:4.00px;top:136.00px;letter-spacing:0.202px;left:12.30px;">400.00K</span>
<span id="t27" class="t" style="font-size:3.6px;font-weight:400;color:#555;line-height:4.00px;top:164.30px;letter-spacing:0.202px;left:12.30px;">200.00K</span>
<span id="t28" class="t" style="font-size:3.6px;font-weight:400;color:#555;line-height:4.00px;top:191.60px;letter-spacing:0.198px;left:16.70px;">0.00K</span>
<span id="t29" class="t" style="font-size:3.8px;font-weight:400;color:#555;line-height:4.00px;top:195.27px;letter-spacing:-0.048px;left:-57.82px;width:200px;text-align:center;">May '17</span>
<span id="t30" class="t" style="font-size:3.8px;font-weight:400;color:#555;line-height:4.00px;top:195.27px;letter-spacing:0.022px;left:-23.89px;width:200px;text-align:center;">Sep '17</span>
<span id="t31" class="t" style="font-size:3.8px;font-weight:400;color:#555;line-height:4.00px;top:195.27px;letter-spacing:0.129px;left:9.86px;width:200px;text-align:center;">Jan '18</span>
<span id="t32" class="t" style="font-size:3.8px;font-weight:400;color:#555;line-height:4.00px;top:220.97px;letter-spacing:-0.051px;left:56.80px;">Income</span>
<span id="t33" class="t" style="font-size:3.8px;font-weight:400;color:#555;line-height:4.00px;top:220.97px;letter-spacing:-0.006px;left:97.40px;">Moving Average</span>
<span id="t34" class="t" style="font-size:4.5px;font-weight:700;color:#fff;line-height:5.00px;top:236.02px;letter-spacing:0.254px;left:12.30px;-webkit-text-stroke:0.1px;">Weekly New Business Trend</span>
<span id="t35" class="t" style="font-size:4.2px;font-weight:400;color:#555;line-height:5.00px;top:248.71px;letter-spacing:0.229px;left:14.20px;">Weekly</span>
<span id="t36" class="t" style="font-size:6.2px;font-weight:400;color:#2e2e2e;line-height:7.00px;top:278.13px;letter-spacing:-0.034px;left:-28.52px;width:200px;text-align:center;">Weekly New Business</span>
<span id="t37" class="t" style="font-size:4.5px;font-weight:400;color:#9a9a9a;line-height:5.00px;top:285.42px;letter-spacing:0.192px;left:-28.40px;width:200px;text-align:center;">In Thousands</span>
<span id="t38" class="t" style="font-size:3.6px;font-weight:400;color:#555;line-height:4.00px;top:293.20px;letter-spacing:0.202px;left:12.30px;">200.00K</span>
<span id="t39" class="t" style="font-size:3.6px;font-weight:400;color:#555;line-height:4.00px;top:314.50px;letter-spacing:0.202px;left:12.30px;">160.00K</span>
<span id="t40" class="t" style="font-size:4.5px;font-weight:700;color:#fff;line-height:5.00px;top:51.52px;letter-spacing:0.189px;left:521.30px;-webkit-text-stroke:0.1px;">Revenue By Period Trend</span>
<span id="t41" class="t" style="font-size:4.2px;font-weight:400;color:#555;line-height:5.00px;top:64.21px;letter-spacing:0.093px;left:523.20px;">By Period</span>
<span id="t42" class="t" style="font-size:6.2px;font-weight:400;color:#2e2e2e;line-height:7.00px;top:93.93px;letter-spacing:-0.039px;left:477.38px;width:200px;text-align:center;">Revenue By Period</span>
<span id="t43" class="t" style="font-size:4.5px;font-weight:400;color:#9a9a9a;line-height:5.00px;top:100.72px;letter-spacing:0.192px;left:477.50px;width:200px;text-align:center;">In Thousands</span>
<span id="t44" class="t" style="font-size:3.6px;font-weight:400;color:#555;line-height:4.00px;top:109.10px;letter-spacing:0.202px;left:521.40px;">550.00K</span>
<span id="t45" class="t" style="font-size:3.6px;font-weight:400;color:#555;line-height:4.00px;top:135.50px;letter-spacing:0.202px;left:521.40px;">500.00K</span>
<span id="t46" class="t" style="font-size:3.6px;font-weight:400;color:#555;line-height:4.00px;top:161.90px;letter-spacing:0.202px;left:521.40px;">450.00K</span>
<span id="t47" class="t" style="font-size:3.6px;font-weight:400;color:#555;line-height:4.00px;top:188.00px;letter-spacing:0.202px;left:521.40px;">400.00K</span>
<span id="t48" class="t" style="font-size:3.8px;font-weight:400;color:#555;line-height:4.00px;top:195.27px;letter-spacing:-0.048px;left:447.58px;width:200px;text-align:center;">May '17</span>
<span id="t49" class="t" style="font-size:3.8px;font-weight:400;color:#555;line-height:4.00px;top:195.27px;letter-spacing:0.022px;left:482.01px;width:200px;text-align:center;">Sep '17</span>
<span id="t50" class="t" style="font-size:3.8px;font-weight:400;color:#555;line-height:4.00px;top:195.27px;letter-spacing:0.129px;left:516.16px;width:200px;text-align:center;">Jan '18</span>
<span id="t51" class="t" style="font-size:3.8px;font-weight:400;color:#555;line-height:4.00px;top:220.97px;letter-spacing:-0.017px;left:559.60px;">Revenue</span>
<span id="t52" class="t" style="font-size:3.8px;font-weight:400;color:#555;line-height:4.00px;top:220.97px;letter-spacing:0.010px;left:600.40px;">Moving Average</span>
<span id="t53" class="t" style="font-size:4.5px;font-weight:700;color:#fff;line-height:5.00px;top:236.02px;letter-spacing:0.162px;left:521.30px;-webkit-text-stroke:0.1px;">Expenses By Period Trend</span>
<span id="t54" class="t" style="font-size:4.2px;font-weight:400;color:#555;line-height:5.00px;top:248.71px;letter-spacing:0.093px;left:523.20px;">By Period</span>
<span id="t55" class="t" style="font-size:6.2px;font-weight:400;color:#2e2e2e;line-height:7.00px;top:278.13px;letter-spacing:-0.001px;left:477.40px;width:200px;text-align:center;">Expenses By Period</span>
<span id="t56" class="t" style="font-size:4.5px;font-weight:400;color:#9a9a9a;line-height:5.00px;top:285.42px;letter-spacing:0.192px;left:477.50px;width:200px;text-align:center;">In Thousands</span>
<span id="t57" class="t" style="font-size:3.6px;font-weight:400;color:#555;line-height:4.00px;top:293.70px;letter-spacing:0.202px;left:521.40px;">500.00K</span>
<span id="t58" class="t" style="font-size:3.6px;font-weight:400;color:#555;line-height:4.00px;top:310.10px;letter-spacing:0.202px;left:521.40px;">400.00K</span>
<span id="t59" class="t" style="font-size:4.5px;font-weight:700;color:#fff;line-height:5.00px;top:51.52px;letter-spacing:0.123px;left:144.00px;-webkit-text-stroke:0.1px;">SuiteAccess</span>
<span id="t60" class="t" style="font-size:5.4px;font-weight:700;color:#33425f;line-height:6.00px;top:67.84px;letter-spacing:0.095px;left:189.00px;-webkit-text-stroke:0.1px;">Balance Sheet</span>
<span id="t61" class="t" style="font-size:5.4px;font-weight:700;color:#33425f;line-height:6.00px;top:67.84px;letter-spacing:0.261px;left:281.60px;-webkit-text-stroke:0.1px;">Trial Balance</span>
<span id="t62" class="t" style="font-size:5.4px;font-weight:700;color:#33425f;line-height:6.00px;top:67.84px;letter-spacing:0.237px;left:359.00px;-webkit-text-stroke:0.1px;">Income Statement</span>
<span id="t63" class="t" style="font-size:5.4px;font-weight:700;color:#33425f;line-height:6.00px;top:67.84px;letter-spacing:0.077px;left:455.00px;-webkit-text-stroke:0.1px;">Budget vs Actual</span>
<span id="t64" class="t" style="font-size:4.5px;font-weight:700;color:#fff;line-height:5.00px;top:112.42px;letter-spacing:0.249px;left:144.00px;-webkit-text-stroke:0.1px;">Key Performance Indicators</span>
<span id="t65" class="t" style="font-size:4.5px;font-weight:700;color:#444;line-height:5.00px;top:123.42px;letter-spacing:0.039px;left:162.00px;-webkit-text-stroke:0.1px;">Revenue</span>
<span id="t66" class="t" style="font-size:4.5px;font-weight:700;color:#444;line-height:5.00px;top:123.42px;letter-spacing:-0.059px;left:217.00px;-webkit-text-stroke:0.1px;">Expenses</span>
<span id="t67" class="t" style="font-size:4.5px;font-weight:700;color:#444;line-height:5.00px;top:123.42px;letter-spacing:0.021px;left:265.00px;-webkit-text-stroke:0.1px;">Operating Cash Flow</span>
<span id="t68" class="t" style="font-size:4.5px;font-weight:700;color:#444;line-height:5.00px;top:123.42px;letter-spacing:0.048px;left:331.00px;-webkit-text-stroke:0.1px;">Total Bank Balance</span>
<span id="t69" class="t" style="font-size:9.3px;font-weight:400;color:#3d741c;line-height:10.00px;top:134.15px;transform:scaleX(0.9738);transform-origin:0 50%;left:165.30px;-webkit-text-stroke:0.2px;">11.9%</span>
<span id="t70" class="t" style="font-size:9.3px;font-weight:400;color:#de2a3a;line-height:10.00px;top:134.15px;transform:scaleX(0.9433);transform-origin:0 50%;left:223.20px;-webkit-text-stroke:0.2px;">9.3%</span>
<span id="t71" class="t" style="font-size:9.3px;font-weight:400;color:#3d741c;line-height:10.00px;top:134.15px;transform:scaleX(1.0452);transform-origin:0 50%;left:285.80px;-webkit-text-stroke:0.2px;">N/A</span>
<span id="t72" class="t" style="font-size:9.3px;font-weight:400;color:#3d741c;line-height:10.00px;top:134.15px;transform:scaleX(0.9555);transform-origin:0 50%;left:345.60px;-webkit-text-stroke:0.2px;">16.5%</span>
<span id="t73" class="t" style="font-size:3.6px;font-weight:400;color:#7a7a7a;line-height:4.00px;top:151.10px;letter-spacing:-0.005px;left:156.00px;">INDICATOR</span>
<span id="t74" class="t" style="font-size:3.6px;font-weight:400;color:#7a7a7a;line-height:4.00px;top:151.10px;letter-spacing:-0.076px;left:220.00px;">PERIOD</span>
<span id="t75" class="t" style="font-size:3.6px;font-weight:400;color:#7a7a7a;line-height:4.00px;top:151.10px;letter-spacing:-0.096px;left:300.00px;">CURRENT</span>
<span id="t76" class="t" style="font-size:3.6px;font-weight:400;color:#7a7a7a;line-height:4.00px;top:151.10px;letter-spacing:-0.168px;left:333.00px;">PREVIOUS</span>
<span id="t77" class="t" style="font-size:3.6px;font-weight:400;color:#7a7a7a;line-height:4.00px;top:151.10px;letter-spacing:-0.078px;left:363.00px;">CHANGE</span>
<span id="t78" class="t" style="font-size:4.5px;font-weight:700;color:#333;line-height:5.00px;top:159.62px;letter-spacing:-0.028px;left:156.00px;-webkit-text-stroke:0.1px;">Revenue</span>
<span id="t79" class="t" style="font-size:4.5px;font-weight:700;color:#1f4190;line-height:5.00px;top:159.62px;letter-spacing:-0.022px;left:220.40px;-webkit-text-stroke:0.1px;">This Period vs. Last Period</span>
<span id="t80" class="t" style="font-size:4.35px;font-weight:700;color:#1f4190;line-height:5.00px;top:159.57px;right:322.00px;-webkit-text-stroke:0.1px;letter-spacing:0.12px;">$524,890</span>
<span id="t81" class="t" style="font-size:4.35px;font-weight:700;color:#1f4190;line-height:5.00px;top:159.57px;right:292.00px;-webkit-text-stroke:0.1px;letter-spacing:0.12px;">$468,908</span>
<span id="t82" class="t" style="font-size:4.3px;font-weight:700;color:#2f6b1c;line-height:5.00px;top:159.55px;right:256.00px;-webkit-text-stroke:0.1px;letter-spacing:0.06px;">11.9%</span>
<span id="t83" class="t" style="font-size:4.5px;font-weight:700;color:#333;line-height:5.00px;top:168.14px;letter-spacing:-0.117px;left:156.00px;-webkit-text-stroke:0.1px;">Expenses</span>
<span id="t84" class="t" style="font-size:4.5px;font-weight:700;color:#1f4190;line-height:5.00px;top:168.14px;letter-spacing:-0.022px;left:220.40px;-webkit-text-stroke:0.1px;">This Period vs. Last Period</span>
<span id="t85" class="t" style="font-size:4.35px;font-weight:700;color:#1f4190;line-height:5.00px;top:168.09px;right:322.00px;-webkit-text-stroke:0.1px;letter-spacing:0.12px;">$438,801</span>
<span id="t86" class="t" style="font-size:4.35px;font-weight:700;color:#1f4190;line-height:5.00px;top:168.09px;right:292.00px;-webkit-text-stroke:0.1px;letter-spacing:0.12px;">$401,297</span>
<span id="t87" class="t" style="font-size:4.3px;font-weight:700;color:#d9232e;line-height:5.00px;top:168.07px;right:256.00px;-webkit-text-stroke:0.1px;letter-spacing:0.06px;">9.3%</span>
<span id="t88" class="t" style="font-size:4.5px;font-weight:700;color:#333;line-height:5.00px;top:176.66px;letter-spacing:0.021px;left:156.00px;-webkit-text-stroke:0.1px;">Operating Cash Flow</span>
<span id="t89" class="t" style="font-size:4.5px;font-weight:700;color:#1f4190;line-height:5.00px;top:176.66px;letter-spacing:-0.022px;left:220.40px;-webkit-text-stroke:0.1px;">This Period vs. Last Period</span>
<span id="t90" class="t" style="font-size:4.35px;font-weight:700;color:#1f4190;line-height:5.00px;top:176.61px;right:322.00px;-webkit-text-stroke:0.1px;letter-spacing:0.12px;">$143,221</span>
<span id="t91" class="t" style="font-size:4.35px;font-weight:700;color:#1f4190;line-height:5.00px;top:176.61px;right:292.00px;-webkit-text-stroke:0.1px;letter-spacing:0.12px;">($21,251)</span>
<span id="t92" class="t" style="font-size:4.3px;font-weight:700;color:#2f6b1c;line-height:5.00px;top:176.59px;right:256.00px;-webkit-text-stroke:0.1px;letter-spacing:0.06px;">N/A</span>
<span id="t93" class="t" style="font-size:4.5px;font-weight:700;color:#333;line-height:5.00px;top:185.18px;letter-spacing:0.048px;left:156.00px;-webkit-text-stroke:0.1px;">Total Bank Balance</span>
<span id="t94" class="t" style="font-size:4.5px;font-weight:700;color:#1f4190;line-height:5.00px;top:185.18px;letter-spacing:-0.022px;left:220.40px;-webkit-text-stroke:0.1px;">This Period vs. Last Period</span>
<span id="t95" class="t" style="font-size:4.35px;font-weight:700;color:#1f4190;line-height:5.00px;top:185.13px;right:322.00px;-webkit-text-stroke:0.1px;letter-spacing:0.12px;">$1,011,896</span>
<span id="t96" class="t" style="font-size:4.35px;font-weight:700;color:#1f4190;line-height:5.00px;top:185.13px;right:292.00px;-webkit-text-stroke:0.1px;letter-spacing:0.12px;">$868,675</span>
<span id="t97" class="t" style="font-size:4.3px;font-weight:700;color:#2f6b1c;line-height:5.00px;top:185.11px;right:256.00px;-webkit-text-stroke:0.1px;letter-spacing:0.06px;">16.5%</span>
<span id="t98" class="t" style="font-size:4.5px;font-weight:700;color:#333;line-height:5.00px;top:193.70px;letter-spacing:0.012px;left:156.00px;-webkit-text-stroke:0.1px;">Payables</span>
<span id="t99" class="t" style="font-size:4.5px;font-weight:700;color:#1f4190;line-height:5.00px;top:193.70px;letter-spacing:0.027px;left:220.40px;-webkit-text-stroke:0.1px;">Today vs. Same Day Last Month</span>
<span id="t100" class="t" style="font-size:4.35px;font-weight:700;color:#1f4190;line-height:5.00px;top:193.65px;right:322.00px;-webkit-text-stroke:0.1px;letter-spacing:0.12px;">$477,173</span>
<span id="t101" class="t" style="font-size:4.35px;font-weight:700;color:#1f4190;line-height:5.00px;top:193.65px;right:292.00px;-webkit-text-stroke:0.1px;letter-spacing:0.12px;">$405,645</span>
<span id="t102" class="t" style="font-size:4.3px;font-weight:700;color:#d9232e;line-height:5.00px;top:193.63px;right:256.00px;-webkit-text-stroke:0.1px;letter-spacing:0.06px;">17.6%</span>
<span id="t103" class="t" style="font-size:4.5px;font-weight:700;color:#333;line-height:5.00px;top:202.22px;letter-spacing:-0.023px;left:156.00px;-webkit-text-stroke:0.1px;">Receivables</span>
<span id="t104" class="t" style="font-size:4.5px;font-weight:700;color:#1f4190;line-height:5.00px;top:202.22px;letter-spacing:0.027px;left:220.40px;-webkit-text-stroke:0.1px;">Today vs. Same Day Last Month</span>
<span id="t105" class="t" style="font-size:4.35px;font-weight:700;color:#1f4190;line-height:5.00px;top:202.17px;right:322.00px;-webkit-text-stroke:0.1px;letter-spacing:0.12px;">$476,982</span>
<span id="t106" class="t" style="font-size:4.35px;font-weight:700;color:#1f4190;line-height:5.00px;top:202.17px;right:292.00px;-webkit-text-stroke:0.1px;letter-spacing:0.12px;">$357,768</span>
<span id="t107" class="t" style="font-size:4.3px;font-weight:700;color:#2f6b1c;line-height:5.00px;top:202.15px;right:256.00px;-webkit-text-stroke:0.1px;letter-spacing:0.06px;">33.3%</span>
<span id="t108" class="t" style="font-size:4.5px;font-weight:700;color:#fff;line-height:5.00px;top:218.52px;letter-spacing:0.198px;left:144.00px;-webkit-text-stroke:0.1px;">Financials</span>
<span id="t109" class="t" style="font-size:4.5px;font-weight:700;color:#444;line-height:5.00px;top:229.62px;letter-spacing:-0.020px;left:153.00px;-webkit-text-stroke:0.1px;">Gross Margin %</span>
<span id="t110" class="t" style="font-size:4.5px;font-weight:700;color:#444;line-height:5.00px;top:229.62px;letter-spacing:0.015px;left:208.00px;-webkit-text-stroke:0.1px;">Net Income as a % of Sales</span>
<span id="t111" class="t" style="font-size:4.5px;font-weight:700;color:#444;line-height:5.00px;top:229.62px;letter-spacing:-0.011px;left:291.00px;-webkit-text-stroke:0.1px;">Bank Balance</span>
<span id="t112" class="t" style="font-size:4.5px;font-weight:700;color:#444;line-height:5.00px;top:229.62px;letter-spacing:-0.150px;left:354.00px;-webkit-text-stroke:0.1px;">EBITDA</span>
<span id="t113" class="t" style="font-size:9.3px;font-weight:400;color:#666;line-height:10.00px;top:240.55px;transform:scaleX(0.9510);transform-origin:0 50%;left:155.00px;">39.34%</span>
<span id="t114" class="t" style="font-size:9.3px;font-weight:400;color:#666;line-height:10.00px;top:240.55px;transform:scaleX(0.9383);transform-origin:0 50%;left:222.40px;">16.40%</span>
<span id="t115" class="t" style="font-size:9.3px;font-weight:400;color:#666;line-height:10.00px;top:240.55px;transform:scaleX(0.9644);transform-origin:0 50%;left:287.00px;">$868,674</span>
<span id="t116" class="t" style="font-size:9.3px;font-weight:400;color:#666;line-height:10.00px;top:240.55px;transform:scaleX(0.9521);transform-origin:0 50%;left:346.00px;">$86,089</span>
<span id="t117" class="t" style="font-size:3.6px;font-weight:400;color:#7a7a7a;line-height:4.00px;top:257.00px;letter-spacing:-0.005px;left:147.60px;">INDICATOR</span>
<span id="t118" class="t" style="font-size:3.6px;font-weight:400;color:#7a7a7a;line-height:4.00px;top:257.00px;letter-spacing:0.084px;left:250.60px;">TODAY</span>
<span id="t119" class="t" style="font-size:3.6px;font-weight:400;color:#7a7a7a;line-height:4.00px;top:257.00px;letter-spacing:-0.098px;left:281.40px;">THIS WEEK</span>
<span id="t120" class="t" style="font-size:3.6px;font-weight:400;color:#7a7a7a;line-height:4.00px;top:257.00px;letter-spacing:0.071px;left:312.00px;">THIS MONTH</span>
<span id="t121" class="t" style="font-size:3.6px;font-weight:400;color:#7a7a7a;line-height:4.00px;top:257.00px;letter-spacing:0.055px;left:346.00px;">LAST MONTH</span>
<span id="t122" class="t" style="font-size:3.6px;font-weight:400;color:#7a7a7a;line-height:4.00px;top:257.00px;letter-spacing:-0.121px;left:380.00px;">THIS FQTD</span>
<span id="t123" class="t" style="font-size:3.6px;font-weight:400;color:#7a7a7a;line-height:4.00px;top:257.00px;letter-spacing:-0.138px;left:410.40px;">LAST FQTD</span>
<span id="t124" class="t" style="font-size:3.6px;font-weight:400;color:#7a7a7a;line-height:4.00px;top:257.00px;letter-spacing:-0.122px;left:441.00px;">THIS FYTD</span>
<span id="t125" class="t" style="font-size:3.6px;font-weight:400;color:#7a7a7a;line-height:4.00px;top:257.00px;letter-spacing:-0.164px;left:471.40px;">LAST FYTD</span>
<span id="t126" class="t" style="font-size:4.5px;font-weight:400;color:#555;line-height:5.00px;top:265.62px;letter-spacing:-0.035px;left:147.60px;">Bank Balance</span>
<span id="t127" class="t" style="font-size:4.35px;font-weight:400;color:#2a4f9e;line-height:5.00px;top:265.57px;left:250.80px;letter-spacing:0.04px;">$868,674</span>
<span id="t128" class="t" style="font-size:4.35px;font-weight:400;color:#2a4f9e;line-height:5.00px;top:265.57px;left:281.60px;letter-spacing:0.04px;">$979,996</span>
<span id="t129" class="t" style="font-size:4.35px;font-weight:400;color:#2a4f9e;line-height:5.00px;top:265.57px;left:312.20px;letter-spacing:0.04px;">$1,011,896</span>
<span id="t130" class="t" style="font-size:4.35px;font-weight:400;color:#2a4f9e;line-height:5.00px;top:265.57px;left:346.20px;letter-spacing:0.04px;">$868,675</span>
<span id="t131" class="t" style="font-size:4.35px;font-weight:400;color:#2a4f9e;line-height:5.00px;top:265.57px;left:380.20px;letter-spacing:0.04px;">$868,674</span>
<span id="t132" class="t" style="font-size:4.35px;font-weight:400;color:#2a4f9e;line-height:5.00px;top:265.57px;left:410.60px;letter-spacing:0.04px;">$557,705</span>
<span id="t133" class="t" style="font-size:4.35px;font-weight:400;color:#2a4f9e;line-height:5.00px;top:265.57px;left:441.20px;letter-spacing:0.04px;">$868,674</span>
<span id="t134" class="t" style="font-size:4.35px;font-weight:400;color:#2a4f9e;line-height:5.00px;top:265.57px;left:471.60px;letter-spacing:0.04px;">$1,053,651</span>
<span id="t135" class="t" style="font-size:4.5px;font-weight:400;color:#555;line-height:5.00px;top:274.14px;letter-spacing:-0.036px;left:147.60px;">Revenue</span>
<span id="t136" class="t" style="font-size:4.35px;font-weight:400;color:#3d5686;line-height:5.00px;top:274.09px;left:250.80px;letter-spacing:0.04px;">$0</span>
<span id="t137" class="t" style="font-size:4.35px;font-weight:400;color:#3d5686;line-height:5.00px;top:274.09px;left:281.60px;letter-spacing:0.04px;">$158,008</span>
<span id="t138" class="t" style="font-size:4.35px;font-weight:400;color:#3d5686;line-height:5.00px;top:274.09px;left:312.20px;letter-spacing:0.04px;">$524,890</span>
<span id="t139" class="t" style="font-size:4.35px;font-weight:400;color:#3d5686;line-height:5.00px;top:274.09px;left:346.20px;letter-spacing:0.04px;">$468,908</span>
<span id="t140" class="t" style="font-size:4.35px;font-weight:400;color:#3d5686;line-height:5.00px;top:274.09px;left:380.20px;letter-spacing:0.04px;">$954,007</span>
<span id="t141" class="t" style="font-size:4.35px;font-weight:400;color:#3d5686;line-height:5.00px;top:274.09px;left:410.60px;letter-spacing:0.04px;">$829,167</span>
<span id="t142" class="t" style="font-size:4.35px;font-weight:400;color:#3d5686;line-height:5.00px;top:274.09px;left:441.20px;letter-spacing:0.04px;">$954,007</span>
<span id="t143" class="t" style="font-size:4.35px;font-weight:400;color:#3d5686;line-height:5.00px;top:274.09px;left:471.60px;letter-spacing:0.04px;">$1,237,500</span>
<span id="t144" class="t" style="font-size:4.5px;font-weight:400;color:#555;line-height:5.00px;top:282.66px;letter-spacing:-0.014px;left:147.60px;">Cost of Goods Sold</span>
<span id="t145" class="t" style="font-size:4.35px;font-weight:400;color:#2a4f9e;line-height:5.00px;top:282.61px;left:250.80px;letter-spacing:0.04px;">$0</span>
<span id="t146" class="t" style="font-size:4.35px;font-weight:400;color:#2a4f9e;line-height:5.00px;top:282.61px;left:281.60px;letter-spacing:0.04px;">$95,372</span>
<span id="t147" class="t" style="font-size:4.35px;font-weight:400;color:#2a4f9e;line-height:5.00px;top:282.61px;left:312.20px;letter-spacing:0.04px;">$318,415</span>
<span id="t148" class="t" style="font-size:4.35px;font-weight:400;color:#2a4f9e;line-height:5.00px;top:282.61px;left:346.20px;letter-spacing:0.04px;">$284,967</span>
<span id="t149" class="t" style="font-size:4.35px;font-weight:400;color:#2a4f9e;line-height:5.00px;top:282.61px;left:380.20px;letter-spacing:0.04px;">$583,019</span>
<span id="t150" class="t" style="font-size:4.35px;font-weight:400;color:#2a4f9e;line-height:5.00px;top:282.61px;left:410.60px;letter-spacing:0.04px;">$537,652</span>
<span id="t151" class="t" style="font-size:4.35px;font-weight:400;color:#2a4f9e;line-height:5.00px;top:282.61px;left:441.20px;letter-spacing:0.04px;">$583,019</span>
<span id="t152" class="t" style="font-size:4.35px;font-weight:400;color:#2a4f9e;line-height:5.00px;top:282.61px;left:471.60px;letter-spacing:0.04px;">$827,618</span>
<span id="t153" class="t" style="font-size:4.5px;font-weight:400;color:#555;line-height:5.00px;top:291.18px;letter-spacing:0.035px;left:147.60px;">Gross Margin</span>
<span id="t154" class="t" style="font-size:4.35px;font-weight:400;color:#3d5686;line-height:5.00px;top:291.13px;left:250.80px;letter-spacing:0.04px;">$0</span>
<span id="t155" class="t" style="font-size:4.35px;font-weight:400;color:#3d5686;line-height:5.00px;top:291.13px;left:281.60px;letter-spacing:0.04px;">$63,636</span>
<span id="t156" class="t" style="font-size:4.35px;font-weight:400;color:#3d5686;line-height:5.00px;top:291.13px;left:312.20px;letter-spacing:0.04px;">$206,475</span>
<span id="t157" class="t" style="font-size:4.35px;font-weight:400;color:#3d5686;line-height:5.00px;top:291.13px;left:346.20px;letter-spacing:0.04px;">$183,941</span>
<span id="t158" class="t" style="font-size:4.35px;font-weight:400;color:#3d5686;line-height:5.00px;top:291.13px;left:380.20px;letter-spacing:0.04px;">$370,988</span>
<span id="t159" class="t" style="font-size:4.35px;font-weight:400;color:#3d5686;line-height:5.00px;top:291.13px;left:410.60px;letter-spacing:0.04px;">$291,514</span>
<span id="t160" class="t" style="font-size:4.35px;font-weight:400;color:#3d5686;line-height:5.00px;top:291.13px;left:441.20px;letter-spacing:0.04px;">$370,988</span>
<span id="t161" class="t" style="font-size:4.35px;font-weight:400;color:#3d5686;line-height:5.00px;top:291.13px;left:471.60px;letter-spacing:0.04px;">$409,882</span>
<span id="t162" class="t" style="font-size:4.5px;font-weight:400;color:#555;line-height:5.00px;top:299.70px;letter-spacing:-0.036px;left:147.60px;">Gross Margin %</span>
<span id="t163" class="t" style="font-size:4.35px;font-weight:400;color:#2a4f9e;line-height:5.00px;top:299.65px;left:250.80px;letter-spacing:0.04px;">N/A</span>
<span id="t164" class="t" style="font-size:4.35px;font-weight:400;color:#2a4f9e;line-height:5.00px;top:299.65px;left:281.60px;letter-spacing:0.04px;">40.02%</span>
<span id="t165" class="t" style="font-size:4.35px;font-weight:400;color:#2a4f9e;line-height:5.00px;top:299.65px;left:312.20px;letter-spacing:0.04px;">39.34%</span>
<span id="t166" class="t" style="font-size:4.35px;font-weight:400;color:#2a4f9e;line-height:5.00px;top:299.65px;left:346.20px;letter-spacing:0.04px;">39.23%</span>
<span id="t167" class="t" style="font-size:4.35px;font-weight:400;color:#2a4f9e;line-height:5.00px;top:299.65px;left:380.20px;letter-spacing:0.04px;">38.89%</span>
<span id="t168" class="t" style="font-size:4.35px;font-weight:400;color:#2a4f9e;line-height:5.00px;top:299.65px;left:410.60px;letter-spacing:0.04px;">35.16%</span>
<span id="t169" class="t" style="font-size:4.35px;font-weight:400;color:#2a4f9e;line-height:5.00px;top:299.65px;left:441.20px;letter-spacing:0.04px;">38.89%</span>
<span id="t170" class="t" style="font-size:4.35px;font-weight:400;color:#2a4f9e;line-height:5.00px;top:299.65px;left:471.60px;letter-spacing:0.04px;">33.12%</span>
<span id="t171" class="t" style="font-size:4.5px;font-weight:400;color:#555;line-height:5.00px;top:308.22px;letter-spacing:0.036px;left:147.60px;">Expenses (excluding Tax,Dep'n &amp; Amort)</span>
<span id="t172" class="t" style="font-size:4.35px;font-weight:400;color:#3d5686;line-height:5.00px;top:308.17px;left:250.80px;letter-spacing:0.04px;">$0</span>
<span id="t173" class="t" style="font-size:4.35px;font-weight:400;color:#3d5686;line-height:5.00px;top:308.17px;left:281.60px;letter-spacing:0.04px;">$95,372</span>
<span id="t174" class="t" style="font-size:4.35px;font-weight:400;color:#3d5686;line-height:5.00px;top:308.17px;left:312.20px;letter-spacing:0.04px;">$438,801</span>
<span id="t175" class="t" style="font-size:4.35px;font-weight:400;color:#3d5686;line-height:5.00px;top:308.17px;left:346.20px;letter-spacing:0.04px;">$401,297</span>
<span id="t176" class="t" style="font-size:4.35px;font-weight:400;color:#3d5686;line-height:5.00px;top:308.17px;left:380.20px;letter-spacing:0.04px;">$908,466</span>
<span id="t177" class="t" style="font-size:4.35px;font-weight:400;color:#3d5686;line-height:5.00px;top:308.17px;left:410.60px;letter-spacing:0.04px;">$859,880</span>
<span id="t178" class="t" style="font-size:4.35px;font-weight:400;color:#3d5686;line-height:5.00px;top:308.17px;left:441.20px;letter-spacing:0.04px;">$908,466</span>
<span id="t179" class="t" style="font-size:4.35px;font-weight:400;color:#3d5686;line-height:5.00px;top:308.17px;left:471.60px;letter-spacing:0.04px;">$1,132,997</span>
<span id="t180" class="t" style="font-size:4.5px;font-weight:400;color:#555;line-height:5.00px;top:316.74px;letter-spacing:-0.213px;left:147.60px;">EBITDA</span>
<span id="t181" class="t" style="font-size:4.35px;font-weight:400;color:#2a4f9e;line-height:5.00px;top:316.69px;left:250.80px;letter-spacing:0.04px;">$0</span>
<span id="t182" class="t" style="font-size:4.35px;font-weight:400;color:#2a4f9e;line-height:5.00px;top:316.69px;left:281.60px;letter-spacing:0.04px;">$63,636</span>
<span id="t183" class="t" style="font-size:4.35px;font-weight:400;color:#2a4f9e;line-height:5.00px;top:316.69px;left:312.20px;letter-spacing:0.04px;">$86,089</span>
<span id="t184" class="t" style="font-size:4.35px;font-weight:400;color:#2a4f9e;line-height:5.00px;top:316.69px;left:346.20px;letter-spacing:0.04px;">$67,611</span>
<span id="t185" class="t" style="font-size:4.35px;font-weight:400;color:#2a4f9e;line-height:5.00px;top:316.69px;left:380.20px;letter-spacing:0.04px;">$45,540</span>
<span id="t186" class="t" style="font-size:4.35px;font-weight:400;color:#2a4f9e;line-height:5.00px;top:316.69px;left:410.60px;letter-spacing:0.04px;">($30,714)</span>
<span id="t187" class="t" style="font-size:4.35px;font-weight:400;color:#2a4f9e;line-height:5.00px;top:316.69px;left:441.20px;letter-spacing:0.04px;">$45,540</span>
<span id="t188" class="t" style="font-size:4.35px;font-weight:400;color:#2a4f9e;line-height:5.00px;top:316.69px;left:471.60px;letter-spacing:0.04px;">$104,503</span>
</div>
</body></html>
